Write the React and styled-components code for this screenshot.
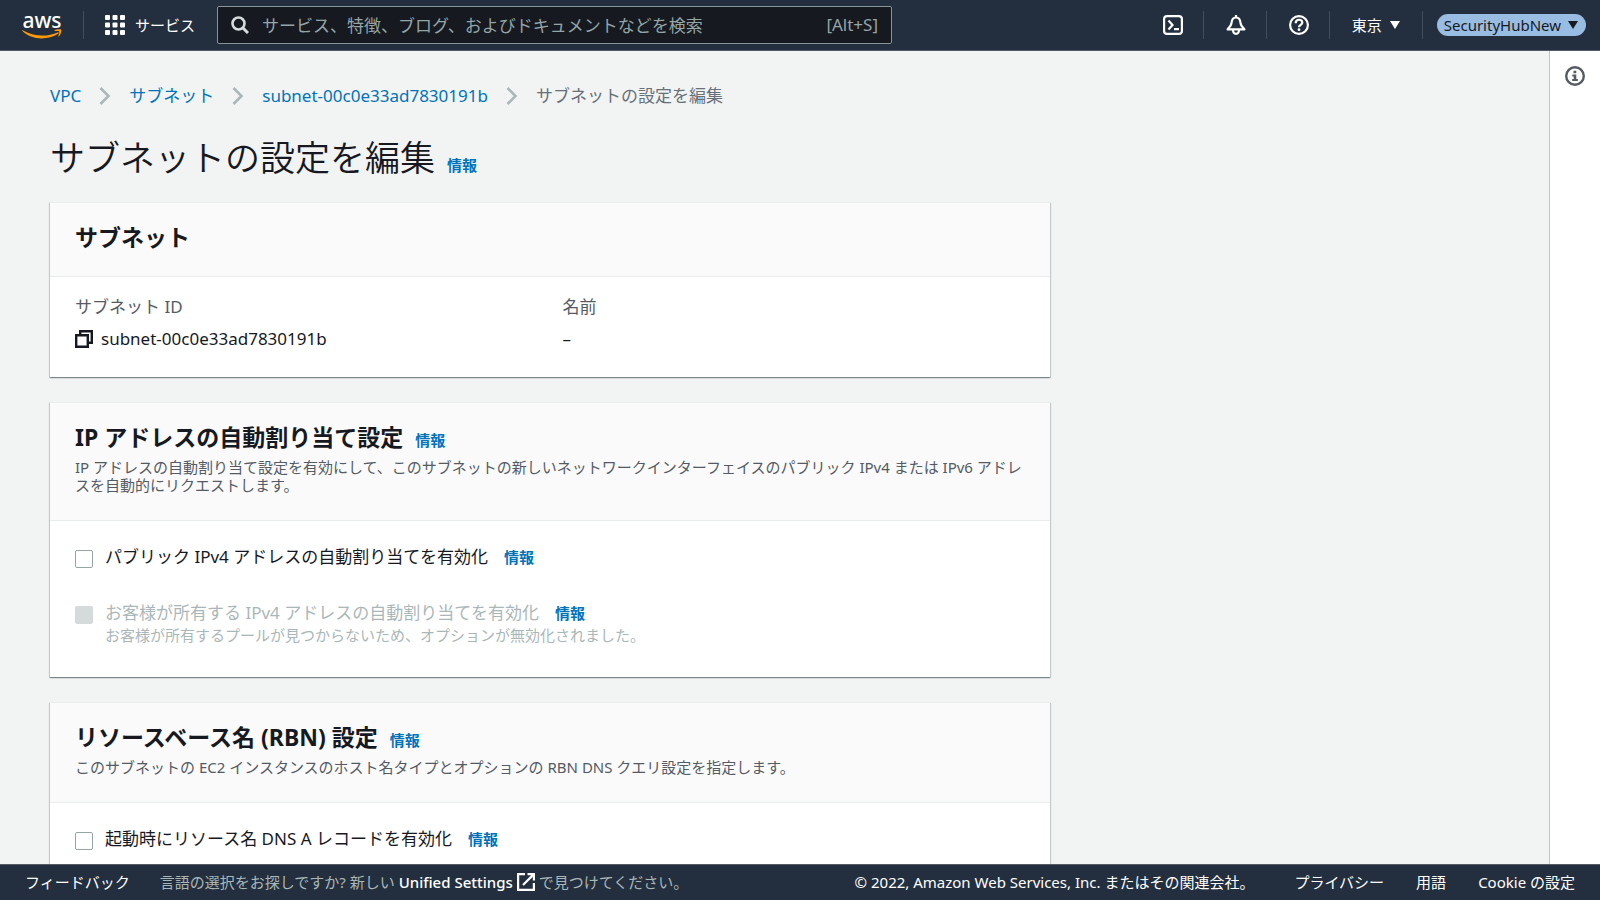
import React from "react";
import styled, { createGlobalStyle } from "styled-components";

const crumbs = ["VPC", "サブネット", "subnet-00c0e33ad7830191b"];

function App() {
  const [search, setSearch] = React.useState("");

  return (
    <Page>
      <GlobalStyle />
      <TopBar>
        <Logo href="#" aria-label="AWS">
          <LogoText>aws</LogoText>
          <Smile />
        </Logo>
        <Divider />
        <ServicesButton type="button">
          <GridIcon />
          <ButtonText>サービス</ButtonText>
        </ServicesButton>
        <SearchBox>
          <SearchIcon />
          <SearchInput
            type="text"
            aria-label="検索"
            placeholder="サービス、特徴、ブログ、およびドキュメントなどを検索"
            value={search}
            onChange={(e) => setSearch(e.target.value)}
          />
          <Shortcut>[Alt+S]</Shortcut>
        </SearchBox>
        <Tools>
          <IconButton type="button" aria-label="CloudShell">
            <ShellIcon />
          </IconButton>
          <Divider />
          <IconButton type="button" aria-label="通知">
            <BellIcon />
          </IconButton>
          <Divider />
          <IconButton type="button" aria-label="ヘルプ">
            <HelpIcon />
          </IconButton>
          <Divider />
          <RegionButton type="button">
            <ButtonText>東京</ButtonText>
            <Caret />
          </RegionButton>
          <Divider />
          <AccountButton type="button">
            SecurityHubNew
            <Caret />
          </AccountButton>
        </Tools>
      </TopBar>

      <Body>
        <Main>
          <Breadcrumbs aria-label="パンくずリスト">
            {crumbs.map((crumb) => (
              <React.Fragment key={crumb}>
                <Crumb href="#">{crumb}</Crumb>
                <Chevron />
              </React.Fragment>
            ))}
            <CurrentCrumb>サブネットの設定を編集</CurrentCrumb>
          </Breadcrumbs>

          <TitleRow>
            <Title>サブネットの設定を編集</Title>
            <InfoLink href="#">情報</InfoLink>
          </TitleRow>

          <Cards>
            <Card title="サブネット">
              <Columns>
                <Field>
                  <Term>サブネット ID</Term>
                  <Value>
                    <CopyButton type="button" aria-label="コピー">
                      <CopyIcon />
                    </CopyButton>
                    subnet-00c0e33ad7830191b
                  </Value>
                </Field>
                <Field>
                  <Term>名前</Term>
                  <Value>–</Value>
                </Field>
              </Columns>
            </Card>

            <Card
              title="IP アドレスの自動割り当て設定"
              info
              description="IP アドレスの自動割り当て設定を有効にして、このサブネットの新しいネットワークインターフェイスのパブリック IPv4 または IPv6 アドレスを自動的にリクエストします。"
            >
              <Options>
                <Option
                  id="public-ipv4"
                  label="パブリック IPv4 アドレスの自動割り当てを有効化"
                />
                <Option
                  id="customer-ipv4"
                  label="お客様が所有する IPv4 アドレスの自動割り当てを有効化"
                  hint="お客様が所有するプールが見つからないため、オプションが無効化されました。"
                  disabled
                />
              </Options>
            </Card>

            <Card
              title="リソースベース名 (RBN) 設定"
              info
              description="このサブネットの EC2 インスタンスのホスト名タイプとオプションの RBN DNS クエリ設定を指定します。"
            >
              <Options>
                <Option
                  id="dns-a"
                  label="起動時にリソース名 DNS A レコードを有効化"
                />
              </Options>
            </Card>
          </Cards>
        </Main>
        <SidePanel>
          <PanelButton type="button" aria-label="情報パネル">
            <InfoIcon />
          </PanelButton>
        </SidePanel>
      </Body>

      <Footer>
        <FooterLink href="#">フィードバック</FooterLink>
        <Language>
          言語の選択をお探しですか? 新しい{" "}
          <SettingsLink href="#">
            Unified Settings
            <ExternalIcon />
          </SettingsLink>{" "}
          で見つけてください。
        </Language>
        <Legal>
          <Copyright>
            © 2022, Amazon Web Services, Inc. またはその関連会社。
          </Copyright>
          <FooterLink href="#">プライバシー</FooterLink>
          <FooterLink href="#">用語</FooterLink>
          <FooterLink href="#">Cookie の設定</FooterLink>
        </Legal>
      </Footer>
    </Page>
  );
}

function Card({ title, info, description, children }) {
  return (
    <CardWrapper>
      <CardHeader>
        <HeadingRow>
          <Heading>{title}</Heading>
          {info && <InfoLink href="#">情報</InfoLink>}
        </HeadingRow>
        {description && <Description>{description}</Description>}
      </CardHeader>
      <CardBody>{children}</CardBody>
    </CardWrapper>
  );
}

function Option({ id, label, hint, disabled }) {
  const [checked, setChecked] = React.useState(false);

  return (
    <OptionRow>
      <Checkbox
        type="checkbox"
        id={id}
        checked={checked}
        disabled={disabled}
        onChange={(e) => setChecked(e.target.checked)}
      />
      <div>
        <OptionLine>
          <OptionLabel htmlFor={id} $disabled={disabled}>
            {label}
          </OptionLabel>
          <InfoLink href="#">情報</InfoLink>
        </OptionLine>
        {hint && <Hint>{hint}</Hint>}
      </div>
    </OptionRow>
  );
}

function Smile() {
  return (
    <svg width="40" height="10" viewBox="0 0 40 10" fill="none">
      <path
        d="M0.6 1.2C11 7.4 25 8.2 35.6 3.4c.9-.4 1.6.5.8 1.1C31.5 7.8 25.3 9.4 19.5 9.4 12.2 9.4 5.4 6.7.4 2c-.5-.5-.2-1 .2-.8Z"
        fill="#ff9900"
      />
      <path
        d="M32.6 1.2c2-1.3 5.6-1.3 6.4-.6.8.8-.1 5-2.3 7-.3.2-.6.1-.5-.2.5-1.4 1.5-4.2 1-5-.5-.7-3.2-.4-4.400-.3-.4.1-.5-.6-.2-.9Z"
        fill="#ff9900"
      />
    </svg>
  );
}

function GridIcon() {
  return (
    <svg width="20" height="20" viewBox="0 0 20 20" fill="currentColor">
      {[0, 7.5, 15].map((y) =>
        [0, 7.5, 15].map((x) => (
          <rect key={`${x}-${y}`} x={x} y={y} width="5" height="5" rx="1" />
        ))
      )}
    </svg>
  );
}

function SearchIcon() {
  return (
    <svg width="18" height="18" viewBox="0 0 18 18" fill="none">
      <circle cx="7.5" cy="7.5" r="6" stroke="#d5dbdb" strokeWidth="2.6" />
      <path d="M12 12l5 5" stroke="#d5dbdb" strokeWidth="3" />
    </svg>
  );
}

function ShellIcon() {
  return (
    <svg width="20" height="20" viewBox="0 0 20 20" fill="none">
      <g stroke="currentColor" strokeWidth="2.2">
        <rect x="1.1" y="1.1" width="17.8" height="17.8" rx="3" />
        <path d="M5.5 5.5L9.500 10l-4 4.500M11 14.200H16" />
      </g>
    </svg>
  );
}

function BellIcon() {
  return (
    <svg width="20" height="20" viewBox="0 0 20 20" fill="none">
      <g stroke="currentColor" strokeWidth="2.2">
        <path
          d="M10 2.5C7 2.5 5.8 4.8 5.6 7.5 5.4 10.500 4 12 1.6 14.4h16.8C16 12 14.6 10.5 14.4 7.5 14.2 4.8 13 2.5 10 2.5Z"
          strokeLinejoin="round"
        />
        <path d="M10 0v3M7 14.5c0 2.800 1 4.300 3 4.300s3-1.500 3-4.300" />
      </g>
    </svg>
  );
}

function HelpIcon() {
  return (
    <svg width="20" height="20" viewBox="0 0 20 20" fill="none">
      <circle cx="10" cy="10" r="8.9" stroke="currentColor" strokeWidth="2.2" />
      <path
        d="M6.7 8.2c0-4.600 6.600-4.400 6.600-.6 0 2.300-3.300 2.100-3.300 4.600"
        stroke="currentColor"
        strokeWidth="2.2"
      />
      <circle cx="10" cy="14.7" r="1.4" fill="currentColor" />
    </svg>
  );
}

function InfoIcon() {
  return (
    <svg width="20" height="20" viewBox="0 0 20 20" fill="none">
      <circle cx="10" cy="10" r="8.8" stroke="#545b64" strokeWidth="2.4" />
      <path
        d="M8.5 4.8h2.8v2.400H8.500ZM7.300 8.400h4v4.600h1.500v2H7.200v-2h1.500v-2.600H7.300Z"
        fill="#545b64"
      />
    </svg>
  );
}

function CopyIcon() {
  return (
    <svg width="18" height="18" viewBox="0 0 18 18" fill="none">
      <g stroke="#16191f" strokeWidth="2.4">
        <path d="M1.2 5.2h11.6v11.6H1.2Z" />
        <path d="M5.2 5.2V1.2h11.6v11.6h-4" />
      </g>
    </svg>
  );
}

function ExternalIcon() {
  return (
    <svg width="18" height="18" viewBox="0 0 18 18" fill="none">
      <g stroke="currentColor" strokeWidth="2.2">
        <path d="M8 1.1H1.1v15.8h15.8V10" />
        <path d="M10.5 1.1h6.4v6.4M16.9 1.1L6 12" />
      </g>
    </svg>
  );
}

function Caret() {
  return (
    <svg width="10" height="8" viewBox="0 0 10 8" fill="currentColor">
      <path d="M0 0h10L5 8Z" />
    </svg>
  );
}

function Chevron() {
  return (
    <svg width="12" height="18" viewBox="0 0 12 18" fill="none">
      <path d="M1.5 1l8 8-8 8" stroke="#aab7b8" strokeWidth="2.5" />
    </svg>
  );
}

const GlobalStyle = createGlobalStyle`
  * {
    box-sizing: border-box;
  }

  body {
    margin: 0;
    color: #16191f;
    font-family: "Noto Sans", "Noto Sans CJK JP", sans-serif;
    font-size: 17px;
    line-height: 22px;
  }

  button,
  input {
    font-family: inherit;
  }

  button {
    padding: 0;
    border: none;
    background: none;
    color: inherit;
    cursor: pointer;
  }

  a {
    color: #0073bb;
    text-decoration: none;
  }

  svg {
    display: block;
    flex-shrink: 0;
  }
`;

const Page = styled.div`
  display: flex;
  flex-direction: column;
  height: 100vh;
  background: #f2f3f3;
`;

const TopBar = styled.header`
  display: flex;
  align-items: center;
  flex-shrink: 0;
  height: 51px;
  padding: 0 14px 0 22px;
  border-bottom: 1px solid #545b64;
  background: #232f3e;
  color: #fff;
`;

const Logo = styled.a`
  display: flex;
  flex-direction: column;
  align-items: center;
  margin-right: 21px;
`;

const LogoText = styled.span`
  color: #fff;
  font-size: 21px;
  font-weight: 500;
  line-height: 18px;
`;

const Divider = styled.div`
  width: 1px;
  height: 28px;
  background: #414d5c;
`;

const ServicesButton = styled.button`
  display: flex;
  align-items: center;
  gap: 10px;
  margin: 0 22px 0 21px;
  font-size: 15px;
`;

const ButtonText = styled.span`
  padding-bottom: 2px;
`;

const SearchBox = styled.div`
  display: flex;
  align-items: center;
  gap: 13px;
  flex: 0 1 675px;
  height: 38px;
  padding: 0 13px;
  border: 1px solid #879596;
  border-radius: 2px;
  background: #161920;
`;

const SearchInput = styled.input`
  flex: 1;
  min-width: 0;
  padding: 0;
  border: none;
  outline: none;
  background: transparent;
  color: #fff;
  font-size: 17px;

  &::placeholder {
    color: #95a5a6;
    opacity: 1;
  }
`;

const Shortcut = styled.span`
  color: #95a5a6;
`;

const Tools = styled.div`
  display: flex;
  align-items: center;
  margin-left: auto;
`;

const IconButton = styled.button`
  padding: 0 20px 0 22px;
`;

const RegionButton = styled.button`
  display: flex;
  align-items: center;
  gap: 8px;
  padding: 0 22px;
  font-size: 15px;
`;

const AccountButton = styled.button`
  display: flex;
  align-items: center;
  gap: 7px;
  height: 22px;
  margin-left: 14px;
  padding: 0 8px 0 7px;
  border-radius: 11px;
  background: #99bce3;
  color: #16191f;
  font-size: 15px;
`;

const Body = styled.div`
  display: flex;
  flex: 1;
  min-height: 0;
`;

const Main = styled.main`
  flex: 1;
  padding: 34px 50px;
  overflow-y: auto;
  scrollbar-width: none;
`;

const SidePanel = styled.aside`
  display: flex;
  align-items: flex-start;
  justify-content: center;
  width: 51px;
  padding-top: 15px;
  border-left: 1px solid #c0c5c6;
  background: #fff;
`;

const PanelButton = styled.button``;

const Breadcrumbs = styled.nav`
  display: flex;
  align-items: center;
  gap: 18px;
`;

const Crumb = styled.a`
  white-space: nowrap;
`;

const CurrentCrumb = styled.span`
  color: #687078;
`;

const TitleRow = styled.div`
  display: flex;
  align-items: baseline;
  gap: 12px;
  margin: 28px 0 21px;
`;

const Title = styled.h1`
  margin: 0;
  font-size: 35px;
  font-weight: 350;
  line-height: 46px;
`;

const InfoLink = styled.a`
  font-size: 15px;
  font-weight: 700;
`;

const Cards = styled.div`
  display: grid;
  gap: 25px;
  max-width: 1000px;
`;

const CardWrapper = styled.section`
  border-top: 1px solid #eaeded;
  background: #fff;
  box-shadow: 0 1px 1px 0 rgba(0, 28, 36, 0.3), 1px 1px 1px 0 rgba(0, 28, 36, 0.15),
    -1px 1px 1px 0 rgba(0, 28, 36, 0.15);
`;

const CardHeader = styled.div`
  padding: 20px 25px 25px;
  border-bottom: 1px solid #eaeded;
  background: #fafafa;
`;

const HeadingRow = styled.div`
  display: flex;
  align-items: baseline;
  gap: 12px;
`;

const Heading = styled.h2`
  margin: 0;
  font-size: 23px;
  font-weight: 700;
  line-height: 28px;
`;

const Description = styled.p`
  margin: 7px 0 1px;
  color: #545b64;
  font-size: 15px;
  line-height: 18px;
`;

const CardBody = styled.div`
  padding: 19px 25px 27px;
`;

const Columns = styled.div`
  display: grid;
  grid-template-columns: 1fr 1fr;
  gap: 25px;
`;

const Field = styled.div`
  display: grid;
  gap: 10px;
`;

const Term = styled.div`
  color: #545b64;
`;

const Value = styled.div`
  display: flex;
  align-items: center;
  gap: 8px;
`;

const CopyButton = styled.button``;

const Options = styled.div`
  display: grid;
  gap: 34px;
  padding: 6px 0;
`;

const OptionRow = styled.div`
  display: flex;
  gap: 12px;
`;

const Checkbox = styled.input`
  appearance: none;
  flex-shrink: 0;
  width: 18px;
  height: 18px;
  margin: 4px 0 0;
  border: 1px solid #95a5a6;
  border-radius: 2px;
  background: #fff;

  &:checked {
    background: #0073bb;
  }

  &:disabled {
    border-color: #d5dbdb;
    background: #d5dbdb;
  }
`;

const OptionLine = styled.div`
  display: flex;
  align-items: baseline;
  gap: 16px;
`;

const OptionLabel = styled.label`
  color: ${(props) => (props.$disabled ? "#aab7b8" : "#16191f")};
`;

const Hint = styled.div`
  margin-top: 2px;
  color: #aab7b8;
  font-size: 15px;
  line-height: 18px;
`;

const Footer = styled.footer`
  display: flex;
  align-items: center;
  flex-shrink: 0;
  gap: 30px;
  height: 36px;
  padding: 0 25px 2px;
  border-top: 1px solid #545b64;
  background: #232f3e;
  color: #fff;
  font-size: 15px;
  white-space: nowrap;
`;

const FooterLink = styled.a`
  color: #fff;
`;

const Language = styled.div`
  display: flex;
  align-items: center;
  gap: 4px;
  color: #aab7b8;
`;

const SettingsLink = styled.a`
  display: flex;
  align-items: center;
  gap: 4px;
  color: #fff;
  font-weight: 500;
`;

const Legal = styled.div`
  display: flex;
  gap: 32px;
  margin-left: auto;
`;

const Copyright = styled.span`
  margin-right: 8px;
`;

export default App;
